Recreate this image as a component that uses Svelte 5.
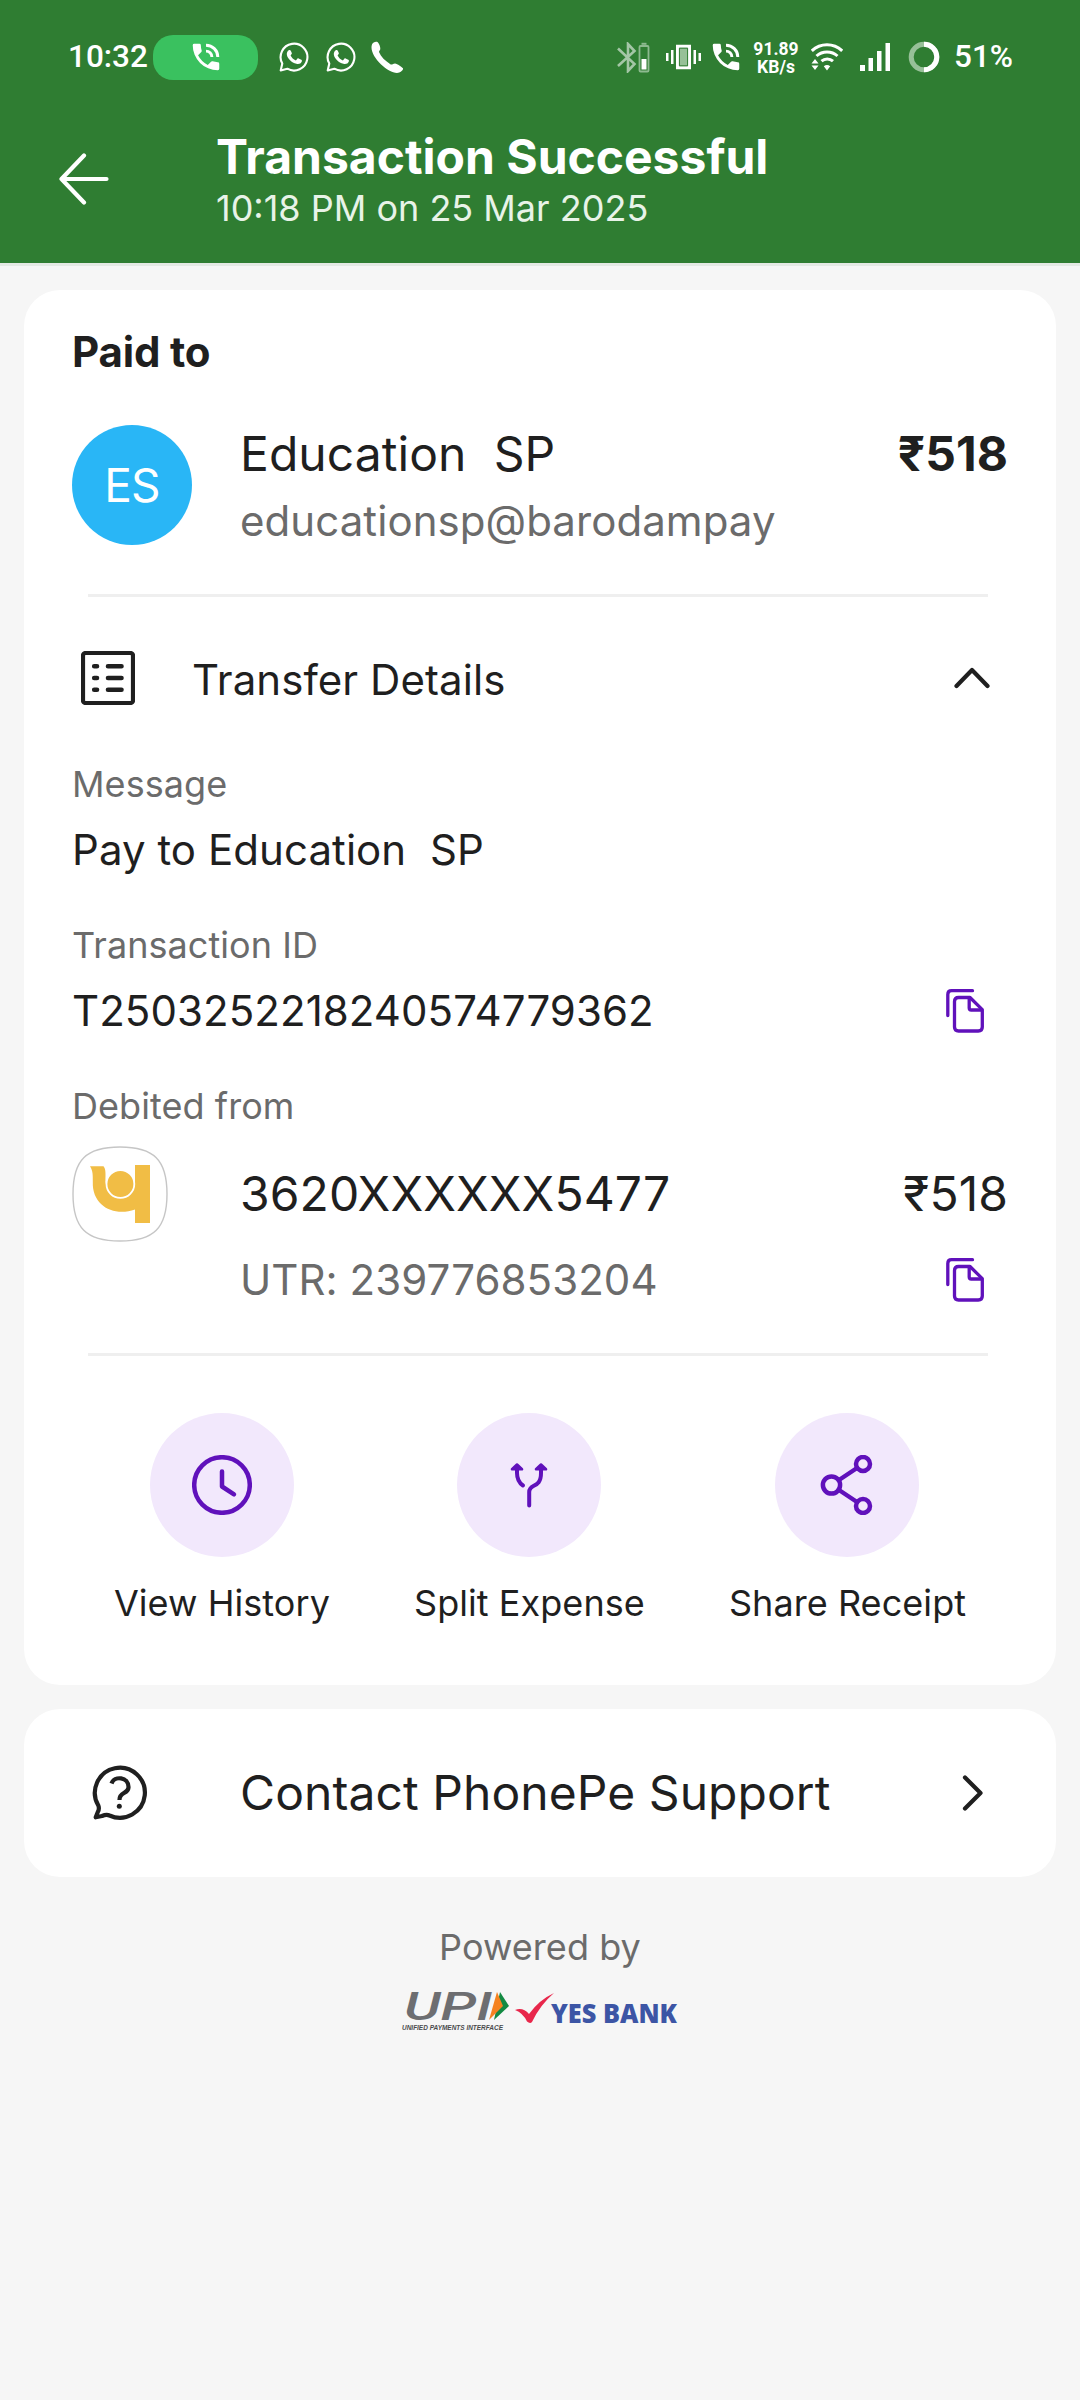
<script>
  const amount = '₹518';
  const actions = [
    { id: 'history', label: 'View History' },
    { id: 'split', label: 'Split Expense' },
    { id: 'share', label: 'Share Receipt' }
  ];
  let open = $state(true);
</script>

{#snippet copyIcon()}
  <svg class="copy" width="38" height="44" viewBox="0 0 38 44" fill="none" stroke="#6011bb" stroke-width="3.3" stroke-linecap="round" stroke-linejoin="round">
    <path d="M1.8 26.5V5.5q0-3.8 3.8-3.8H26.5" />
    <path d="M12.5 8.5H24L36.3 20.7V38q0 4-4 4H12.5q-4 0-4-4V12.5q0-4 4-4z" />
    <path d="M23.2 9.5V19q0 2 2 2H35.5" />
  </svg>
{/snippet}

{#snippet callIcon()}
  <svg width="28" height="28" viewBox="2.5 2.5 19 19" fill="#fff">
    <path d="M20 15.5c-1.25 0-2.45-.2-3.57-.57a1 1 0 0 0-1.02.24l-2.2 2.2a15.05 15.05 0 0 1-6.59-6.58l2.2-2.21a.96.96 0 0 0 .25-1A11.36 11.36 0 0 1 8.5 4a1 1 0 0 0-1-1H4a1 1 0 0 0-1 1 17 17 0 0 0 17 17 1 1 0 0 0 1-1v-3.5a1 1 0 0 0-1-1zM19 12h2a9 9 0 0 0-9-9v2a7 7 0 0 1 7 7zM15 12h2a5 5 0 0 0-5-5v2a3 3 0 0 1 3 3z" />
  </svg>
{/snippet}

{#snippet whatsappIcon()}
  <svg class="wa" width="30" height="30" viewBox="0 0 30 30">
    <path d="M1.7 28.5 3.3 21.6A13.4 13.4 0 1 1 8.3 26.7z" fill="none" stroke="#fff" stroke-width="2.1" stroke-linejoin="round" />
    <path d="M9.7 8.2c.8-.5 1.700-.4 2.100.5l1 2.400c.2.600-.1 1.100-1.200 2.400 1.200 2.300 2.700 3.800 5.300 4.900l1.400-1.700c.4-.4.8-.5 1.300-.3l2.700 1.300c.7.400.7.900.5 1.700-.7 2.200-3.100 2.900-5.400 2.300-4.900-1.300-8.700-5.100-9.500-8.800-.4-2 .5-3.900 1.800-4.700z" fill="#fff" />
  </svg>
{/snippet}

<div class="screen">
  <header>
    <div class="status">
      <span class="time">10:32</span>
      <span class="pill">{@render callIcon()}</span>
      {@render whatsappIcon()}
      {@render whatsappIcon()}
      <svg class="handset" width="33" height="33" viewBox="0 0 33 33" fill="#fff">
        <path d="M1 3.5C2 1 5 .3 6.8 1.2 8.3 3 9.5 6 9.3 8c-.2 1.300-1.300 2-1.300 3 2 4.800 6 8.800 11.700 12.400 1.500.6 2.500-1 4.300-1 2.500.6 6.500 3 8 4.900.7 2-3 4.700-6 4.700C17 32 .5 17 .5 6.500c0-1 .1-2 .5-3z" />
      </svg>

      <span class="grow"></span>

      <svg class="bt" width="34" height="31" viewBox="0 0 34 31" fill="none">
        <path d="M1 6.500 17.500 22 11 29V2l6.500 7L1 24" stroke="#a4c6a6" stroke-width="2.6" />
        <rect x="22.500" y="4" width="9" height="25.500" rx="1" stroke="#8dba8f" stroke-width="1.800" />
        <path d="M24.500 1.800h5" stroke="#8dba8f" stroke-width="2" />
        <path d="M24.500 17h5v10.500h-5z" fill="#fff" />
      </svg>
      <svg class="vibrate" width="35" height="26" viewBox="0 0 35 26" fill="#fff">
        <path d="M0 9h2.500v8H0zM5 6h2.500v14H5zM27.500 6H30v14h-2.500zM32.500 9H35v8h-2.500z" />
        <path d="M11.500 2.300h12v21.400h-12z" fill="#97c098" stroke="#fff" stroke-width="3" />
        <path d="M13.400 4.200h8.200v17.600h-8.200z" fill="none" stroke="#2f7d32" stroke-width="1" />
      </svg>
      <span class="call">{@render callIcon()}</span>
      <span class="speed"><b>91.89</b><b>KB/s</b></span>
      <svg class="wifi" width="32" height="28" viewBox="0 0 32 28" fill="none" stroke="#fff" stroke-width="3">
        <path d="M.8 7.800a22 22 0 0 1 30.400 0M5.500 13a15.500 15.500 0 0 1 21 0M10.500 18.200a8.500 8.500 0 0 1 11.500 0" />
        <path d="M12.800 23.300a5 5 0 0 1 6.400 0L16 27.500zM.5 20.500 4 16l3.500 4.500zM.5 22.500 4 27l3.500-4.500z" fill="#fff" stroke="none" />
      </svg>
      <svg class="signal" width="31" height="28" viewBox="0 0 31 28" fill="#fff">
        <path d="M0 22h5v6H0zM8.500 15h4.500v13H8.500zM17 8h4.500v20H17zM25.500 0H30v28h-4.500z" />
      </svg>
      <svg class="ring" width="32" height="32" viewBox="0 0 32 32" fill="none" stroke-width="5">
        <circle cx="16" cy="16" r="12.800" stroke="#97c098" />
        <path d="M16 3.200a12.800 12.800 0 0 1 0 25.600" stroke="#fff" />
      </svg>
      <span class="percent">51%</span>
    </div>

    <div class="bar">
      <svg width="50" height="52" viewBox="0 0 50 52" fill="none" stroke="#fff" stroke-width="4.200" stroke-linecap="round" stroke-linejoin="round">
        <path d="M25 2.500 2.500 26 25 49.500M2.500 26H47.500" />
      </svg>
      <div class="heading">
        <h1>Transaction Successful</h1>
        <p>10:18 PM on 25 Mar 2025</p>
      </div>
    </div>
  </header>

  <main>
    <section class="card">
      <h2>Paid to</h2>
      <div class="payee">
        <div class="avatar">ES</div>
        <div class="who">
          <div class="name">Education  SP</div>
          <div class="vpa">educationsp@barodampay</div>
        </div>
        <div class="amount bold">{amount}</div>
      </div>
      <hr />

      <div class="toggle" role="button" tabindex="0" onclick={() => (open = !open)} onkeydown={() => {}}>
        <svg width="54" height="54" viewBox="0 0 54 54" fill="none" stroke="#1f1f1f" stroke-width="4.200">
          <rect x="2" y="2" width="50" height="50" rx="2.500" />
          <g stroke-width="4.600" stroke-linecap="round">
            <path d="M13.200 15.200h2.800M13.200 27h2.800M13.200 38.800h2.800M27 15.200h13.500M27 27h13.500M27 38.800h13.500" />
          </g>
        </svg>
        <span>Transfer Details</span>
        <svg width="36" height="22" viewBox="0 0 36 22" fill="none" stroke="#1f1f1f" stroke-width="4.200" stroke-linecap="round" stroke-linejoin="round">
          <path d="M2.500 19 18 3 33.500 19" />
        </svg>
      </div>

      {#if open}
        <div class="label first">Message</div>
        <div class="value">Pay to Education  SP</div>

        <div class="label">Transaction ID</div>
        <div class="value">
          <span>T2503252218240574779362</span>
          {@render copyIcon()}
        </div>

        <div class="label">Debited from</div>
        <div class="bank">
          <svg width="96" height="96" viewBox="0 0 96 96">
            <path d="M48 1C82 1 95 14 95 48S82 95 48 95 1 82 1 48 14 1 48 1z" fill="#fff" stroke="#c6c6c6" stroke-width="1.400" />
            <path d="M18 20.200H31.500C34 23 33.600 28 33.400 36A15.200 15.200 0 0 0 63 38V19H78V77H63V63.500C42 71 20 60 20.800 36 20.800 29 21 25 18 20.200z" fill="#f1bd45" />
            <circle cx="48.400" cy="38" r="13.900" fill="#f1bd45" stroke="#fff" stroke-width="1.800" />
          </svg>
          <span class="name">3620XXXXXX5477</span>
          <span class="amount">{amount}</span>
        </div>
        <div class="value utr">
          <span>UTR: 239776853204</span>
          {@render copyIcon()}
        </div>
      {/if}
      <hr />

      <div class="actions">
        {#each actions as action (action.id)}
          <div class="action">
            <div class="disc">
              <svg width="60" height="60" viewBox="0 0 60 60" fill="none" stroke="#6011bb" stroke-width="4.500" stroke-linecap="round" stroke-linejoin="round">
                {#if action.id === 'history'}
                  <circle cx="30" cy="30" r="27.800" />
                  <path d="M30 16.500V31.500L42 39.300" />
                {:else if action.id === 'split'}
                  <path d="M18 14V18Q18 26.500 24 30.500M42 14V18C42 34 30.200 28 30.200 37V50.500" stroke-width="4" />
                  <path d="M13 14.300 18 9.500 23 14.300zM37 14.300 42 9.500 47 14.300z" stroke-width="2.600" fill="#6011bb" />
                {:else}
                  <circle cx="14.500" cy="30" r="8.600" />
                  <circle cx="46" cy="9" r="7" />
                  <circle cx="46" cy="51" r="7" />
                  <path d="M22 25 40 13M22 35 40 47" />
                {/if}
              </svg>
            </div>
            <span>{action.label}</span>
          </div>
        {/each}
      </div>
    </section>

    <section class="card support">
      <svg width="56" height="56" viewBox="0 0 56 56" fill="none" stroke="#1f1f1f" stroke-width="4.200" stroke-linecap="round" stroke-linejoin="round">
        <path d="M6.200 40.200A25 25 0 1 1 17.500 50.500Q14.500 49 10 51L3.700 52.300 5.800 47Q7.700 43.500 6.200 40.200z" />
        <path d="M19.500 18.500C22 10.500 37 11.500 36.500 22.500 36 29.500 27.300 26.500 27.500 35" stroke-linecap="butt" />
        <circle cx="27.300" cy="41.300" r="2.500" fill="#1f1f1f" stroke="none" />
      </svg>
      <span class="name">Contact PhonePe Support</span>
      <svg width="22" height="36" viewBox="0 0 22 36" fill="none" stroke="#1f1f1f" stroke-width="4.200" stroke-linecap="round" stroke-linejoin="round">
        <path d="M3 2.500 18.500 18 3 33.500" />
      </svg>
    </section>
  </main>

  <footer>
    <p>Powered by</p>
    <svg width="292" height="60" viewBox="-8 -12 292 60">
      <text class="upi" x="2" y="28" textLength="88" lengthAdjust="spacingAndGlyphs">UPI</text>
      <path d="M98 0 107 14 92 28z" fill="#138a43" />
      <path d="M95 0 101 14 87 28z" fill="#f58220" />
      <text class="tagline" x="0" y="38" textLength="101" lengthAdjust="spacingAndGlyphs">UNIFIED PAYMENTS INTERFACE</text>
      <path d="M113 18Q121 15 127 22 137 8 152 1 138 13 130 30 128 32 125 29.500 121 21 113 18z" fill="#e8274b" />
      <text class="yes" x="149" y="31" textLength="126" lengthAdjust="spacingAndGlyphs">YES BANK</text>
    </svg>
  </footer>
</div>

<style>
  :global(body) {
    margin: 0;
    background: #f6f6f6;
  }
  .screen {
    width: 1080px;
    height: 2400px;
    overflow: hidden;
    background: #f6f6f6;
    color: #1f1f1f;
    font-family: Inter, "Noto Sans", sans-serif;
    font-size: 42px;
    line-height: 50px;
    letter-spacing: 0.0015em;
  }
  svg {
    display: block;
    flex: none;
  }
  h1, h2, p {
    margin: 0;
  }
  header {
    background: #2f7d32;
    color: #fff;
    height: 263px;
    border-bottom: 3px solid #e4e9e4;
    letter-spacing: 0;
  }

  /* status bar */
  .status {
    display: flex;
    align-items: center;
    height: 114px;
    padding: 0 67px 0 68px;
    font-family: Roboto, sans-serif;
    font-size: 32px;
    font-weight: 500;
  }
  .time {
    width: 85px;
    font-size: 31.5px;
  }
  .percent {
    font-size: 31.5px;
  }
  .pill {
    display: flex;
    align-items: center;
    justify-content: center;
    width: 105px;
    height: 45px;
    border-radius: 20px;
    background: #3ac15f;
    margin-right: 21px;
  }
  .wa {
    margin-right: 17px;
  }
  .handset {
    margin-left: -2px;
  }
  .grow {
    flex: 1;
  }
  .vibrate {
    margin-left: 15px;
  }
  .call {
    margin-left: 11px;
  }
  .speed {
    display: flex;
    flex-direction: column;
    align-items: center;
    width: 46px;
    margin: 0 12px 0 13px;
    font-size: 17.5px;
    line-height: 18.5px;
    padding-top: 2px;
  }
  .speed b {
    font-weight: 700;
  }
  .signal {
    margin-left: 17px;
  }
  .ring {
    margin: 0 14px 0 17px;
  }

  /* title bar */
  .bar {
    display: flex;
    align-items: center;
    gap: 107px;
    padding: 14px 0 0 59px;
  }
  h1 {
    font-size: 48px;
    line-height: 58px;
    font-weight: 700;
  }
  .heading p {
    font-size: 36px;
    line-height: 44px;
    color: #e8f3e8;
  }

  main {
    display: flex;
    flex-direction: column;
    gap: 24px;
    padding: 24px 24px 0;
  }
  .card {
    background: #fff;
    border-radius: 36px;
    padding: 37px 48px 60px;
  }
  h2 {
    font-size: 42px;
    line-height: 50px;
    font-weight: 700;
    letter-spacing: -0.004em;
  }
  .payee {
    display: flex;
    margin-top: 48px;
    height: 120px;
  }
  .avatar {
    width: 120px;
    height: 120px;
    line-height: 120px;
    margin-right: 48px;
    border-radius: 50%;
    background: #29b6f6;
    color: #fff;
    font-size: 46px;
    text-align: center;
    letter-spacing: -0.02em;
  }
  .who {
    flex: 1;
  }
  .name, .amount {
    font-size: 48px;
    line-height: 58px;
    white-space: pre;
  }
  .vpa {
    margin-top: 13px;
    color: #6b6b6b;
  }
  .bold {
    font-weight: 700;
  }
  hr {
    height: 3px;
    border: 0;
    margin: 49px 20px 0 16px;
    background: #efefef;
  }
  .toggle {
    display: flex;
    align-items: center;
    margin-top: 54px;
    padding: 0 18px 0 9px;
  }
  .toggle span {
    flex: 1;
    margin-left: 57px;
    padding-top: 3px;
  }
  .label {
    margin-top: 48px;
    font-size: 36px;
    line-height: 44px;
    color: #6b6b6b;
  }
  .label.first {
    margin-top: 57px;
  }
  .value {
    display: flex;
    align-items: center;
    justify-content: space-between;
    height: 50px;
    margin-top: 19px;
    white-space: pre;
  }
  .copy {
    margin-right: 24px;
  }
  .bank {
    display: flex;
    align-items: center;
    margin-top: 18px;
  }
  .bank .name {
    flex: 1;
    margin-left: 72px;
  }
  .utr {
    margin: 13px 0 0 168px;
    color: #6b6b6b;
  }
  .utr + hr {
    margin-top: 48px;
  }
  .actions {
    display: flex;
    justify-content: center;
    gap: 84px;
    margin-top: 57px;
  }
  .action {
    display: flex;
    flex-direction: column;
    align-items: center;
    gap: 24px;
    font-size: 36px;
    line-height: 44px;
  }
  .disc {
    display: flex;
    align-items: center;
    justify-content: center;
    width: 144px;
    height: 144px;
    border-radius: 50%;
    background: #f2e8fc;
  }
  .support {
    display: flex;
    align-items: center;
    height: 168px;
    box-sizing: border-box;
    padding: 0 72px 0 68px;
  }
  .support .name {
    flex: 1;
    margin-left: 92px;
  }

  footer {
    display: flex;
    flex-direction: column;
    align-items: center;
    gap: 11px;
    margin-top: 48px;
  }
  footer p {
    font-size: 36px;
    line-height: 44px;
    color: #6b6b6b;
  }
  footer svg {
    letter-spacing: 0;
  }
  .upi {
    font: italic 500 38px Roboto, sans-serif;
    fill: #6d6e71;
  }
  .tagline {
    font: italic 700 7.5px "Liberation Sans", sans-serif;
    fill: #4a4a4c;
  }
  .yes {
    font: 800 27px "Open Sans", sans-serif;
    fill: #3c55a5;
  }
</style>
